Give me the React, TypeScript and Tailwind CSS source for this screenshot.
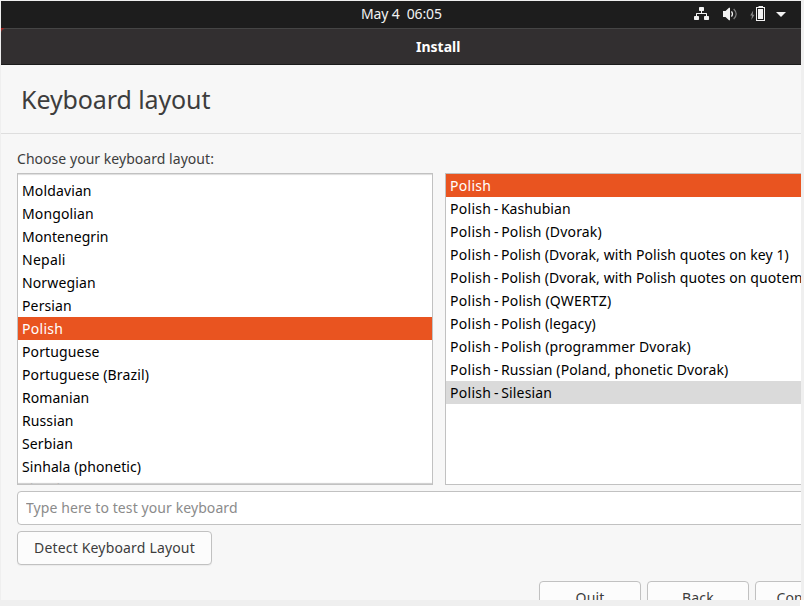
import type { ReactNode } from "react";

type Entry = { name: string; className?: string };

const languages: Entry[] = [
  { name: "Moldavian" },
  { name: "Mongolian" },
  { name: "Montenegrin", className: "tracking-[0.05px]" },
  { name: "Nepali", className: "tracking-[0.25px]" },
  { name: "Norwegian" },
  { name: "Persian" },
  { name: "Polish", className: "bg-[#e95420] text-white tracking-[0.3px]" },
  { name: "Portuguese" },
  { name: "Portuguese (Brazil)" },
  { name: "Romanian", className: "tracking-[0.05px]" },
  { name: "Russian", className: "tracking-[0.1px]" },
  { name: "Serbian" },
  { name: "Sinhala (phonetic)", className: "tracking-[0.08px]" },
  { name: "Slovak", className: "-mt-px" },
];

const variants: Entry[] = [
  { name: "Polish", className: "bg-[#e95420] text-white" },
  { name: "Polish - Kashubian", className: "tracking-[0.05px]" },
  { name: "Polish - Polish (Dvorak)", className: "tracking-[0.16px]" },
  { name: "Polish - Polish (Dvorak, with Polish quotes on key 1)", className: "tracking-[0.08px]" },
  { name: "Polish - Polish (Dvorak, with Polish quotes on quotemark key)", className: "tracking-[0.08px]" },
  { name: "Polish - Polish (QWERTZ)", className: "tracking-[0.16px]" },
  { name: "Polish - Polish (legacy)", className: "tracking-[0.1px]" },
  { name: "Polish - Polish (programmer Dvorak)", className: "tracking-[0.13px]" },
  { name: "Polish - Russian (Poland, phonetic Dvorak)", className: "tracking-[0.1px]" },
  { name: "Polish - Silesian", className: "bg-[#dadada] tracking-[0.16px]" },
];

function Row({ name, className = "tracking-[0.13px]" }: Entry) {
  return (
    <li className={`h-[23px] shrink-0 whitespace-nowrap pl-1 leading-[23px] ${className}`}>
      <span>{name}</span>
    </li>
  );
}

// Variant names keep a tight separator between language and variant.
function VariantRow({ name, className = "" }: Entry) {
  const [language, variant] = name.split(" - ");
  return (
    <li className={`h-[23px] shrink-0 whitespace-nowrap pl-1 leading-[23px] ${className}`}>
      <span className="tracking-[0.3px]">{language}</span>
      {variant && <span className="[word-spacing:-1.2px]"> - </span>}
      {variant && <span>{variant}</span>}
    </li>
  );
}

function Button({ children, className = "" }: { children: ReactNode; className?: string }) {
  return (
    <button
      className={`h-[34px] shrink-0 whitespace-nowrap rounded-[4px] border border-[#c1c1c1] bg-[#fcfcfc] text-center leading-8 tracking-[0.17px] shadow-[0_1px_1px_rgba(0,0,0,0.05)] ${className}`}
    >
      {children}
    </button>
  );
}

function StatusIcons() {
  return (
    <div className="flex h-full items-start pt-[5px] text-[#f2f2f2]">
      <svg width="16" height="16" viewBox="0 0 16 16" fill="currentColor">
        <rect x="5" y="1" width="5" height="4" rx="0.7" />
        <rect x="0" y="10" width="5" height="4" rx="0.7" />
        <rect x="10" y="10" width="5" height="4" rx="0.7" />
        <path d="M7 5h1v2h4.500l.5.5V10h-1V8H3v2H2V7.500l.5-.5H7z" />
      </svg>
      <svg className="ml-3" width="16" height="16" viewBox="0 0 16 16" fill="currentColor">
        <path d="M1 5h2.500L7 1.700h1v12.600H7L3.500 11H1z" />
        <path d="M9.500 5.300q2 2.700 0 5.400" fill="none" stroke="currentColor" strokeWidth="1.200" />
        <path d="M11.700 3q5 5 0 10" fill="none" stroke="#808080" strokeWidth="1.200" />
      </svg>
      <svg className="ml-3" width="16" height="16" viewBox="0 0 16 16">
        <path d="M3.200 4.500L.2 9.500H2L1.300 14l3.200-5.300H2.700z" fill="#8a8a8a" />
        <path d="M8.500 0h4.500v1h2v14H6V1h2.500zM7 2v12h7V2z" fill="currentColor" fillRule="evenodd" />
        <rect x="8" y="3" width="5" height="10" fill="currentColor" />
      </svg>
      <svg className="ml-2" width="12" height="16" viewBox="0 0 12 16" fill="currentColor">
        <path d="M2 6h10L7 11z" />
      </svg>
    </div>
  );
}

export default function App() {
  return (
    <div className="h-[606px] w-[804px] overflow-hidden bg-[#efefef] pl-px pt-px font-['Noto_Sans',sans-serif] text-[14px]">
      <div className="flex h-[599px] w-[800px] flex-col overflow-hidden bg-[#f7f7f7] text-[#3d3d3d]">
        <header className="grid h-[27px] shrink-0 grid-cols-[360px_82px_1fr] bg-[#1d1d1d] leading-[26px] text-[#f2f2f2]">
          <span className="col-start-2 whitespace-pre tracking-[-0.13px]"><span>May 4  06:05</span></span>
          <div className="pl-[251px]">
            <StatusIcons />
          </div>
        </header>
        <div className="shrink-0 bg-[#a82420]">
          <div className="h-[37px] rounded-tl-[5px] border-b border-t border-b-[#1b1b1b] border-t-[#454545] bg-[#322f30] pl-[415px] font-bold leading-[35px] text-white">
            <span>Install</span>
          </div>
        </div>
        <div className="h-[69px] shrink-0 border-b border-[#dedede] pl-5 text-[25px] leading-[69px] tracking-[-0.1px]">
          <h1><span>Keyboard layout</span></h1>
        </div>
        <main className="flex w-[1000px] flex-col pl-4 pt-[15px]">
          <label className="h-6 leading-[19px] tracking-[0.04px]"><span>Choose your keyboard layout:</span></label>
          <div className="flex gap-3">
            <div className="relative h-[312px] w-[416px] overflow-hidden border border-[#c1c1c1] bg-white pt-[5px] text-black">
              <ul className="flex flex-col">
                {languages.map((e) => <Row key={e.name} {...e} />)}
              </ul>
              <div className="pointer-events-none absolute inset-0 shadow-[inset_0_2px_1px_-1px_#ddd,inset_0_-2px_1px_-1px_#ccc]" />
            </div>
            <ul className="flex h-[312px] w-[416px] flex-col overflow-hidden border border-[#c1c1c1] bg-white text-black">
              {variants.map((e) => <VariantRow key={e.name} {...e} />)}
            </ul>
          </div>
          <input
            className="mt-1.5 h-[34px] w-[844px] rounded-[4px] border border-[#c1c1c1] bg-white px-2 pb-0.5 tracking-[0.09px] placeholder:text-[#8b8b8b]"
            placeholder="Type here to test your keyboard"
          />
          <Button className="mt-1.5 w-[195px]"><span>Detect Keyboard Layout</span></Button>
          <div className="mt-4 flex gap-1.5 pl-[522px]">
            <Button className="w-[102px]"><span>Quit</span></Button>
            <Button className="w-[102px]"><span>Back</span></Button>
            <Button className="w-[102px] pl-[2px]"><span>Continue</span></Button>
          </div>
        </main>
      </div>
      <div className="ml-[799px] h-1.5 bg-white" />
    </div>
  );
}
